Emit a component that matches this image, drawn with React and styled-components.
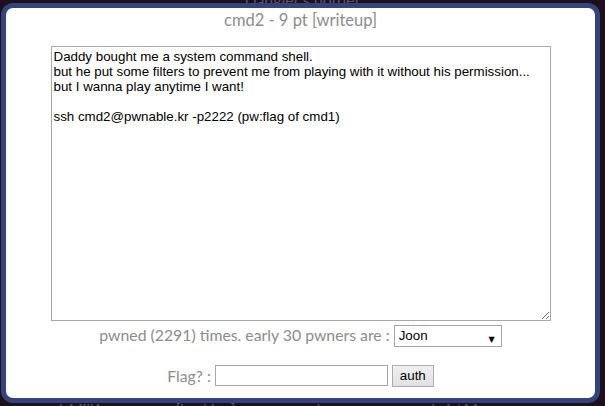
import styled, { createGlobalStyle } from "styled-components"

const GlobalStyle = createGlobalStyle`
  html, body {
    margin: 0;
    padding: 0;
    background: #1d0f1c;
    overflow: hidden;
  }
`

const Page = styled.div`
  position: relative;
  width: 605px;
  height: 406px;
  overflow: hidden;
  background: #1d0f1c;
  font-family: Lato, "Liberation Sans", sans-serif;
`

const BackTitle = styled.div`
  text-align: center;
  color: #5e5363;
  font-size: 16px;
  line-height: 16px;
  margin-top: -8px;
`

const BackRow = styled.div`
  position: absolute;
  left: 18px;
  top: 400px;
  display: grid;
  grid-template-columns: repeat(4, 125px);
  color: #5e5363;
  font-size: 15px;
  text-align: center;
`

const Modal = styled.div`
  position: absolute;
  left: 1px;
  top: 3px;
  width: 589px;
  height: 390px;
  background: #fff;
  border: 5px solid #33447a;
  border-radius: 12px;
  display: flex;
  flex-direction: column;
  align-items: center;
`

const Title = styled.div`
  margin-top: 1px;
  color: #8c8c8c;
  font-size: 16.5px;
  line-height: 22px;
`

const Desc = styled.textarea`
  margin-top: 15px;
  width: 500px;
  height: 275px;
  box-sizing: border-box;
  border: 1px solid #a9a9a9;
  padding: 2px;
  font-family: "Liberation Sans", Arial, sans-serif;
  font-size: 13.33px;
  line-height: 15px;
  color: #000;
  resize: both;
  outline: none;
`

const Row = styled.div`
  display: flex;
  align-items: center;
  margin-top: ${(p) => p.$top}px;
  color: #8c8c8c;
  font-size: 15.8px;
  line-height: 20px;
`

const Label = styled.span`
  margin-right: 4px;
`

const SelectWrap = styled.span`
  position: relative;
  display: inline-block;
`

const Select = styled.select`
  appearance: none;
  width: 108px;
  height: 22px;
  box-sizing: border-box;
  border: 1px solid #a6a6a6;
  background: #fff;
  padding: 0 4px;
  font-family: "Liberation Sans", Arial, sans-serif;
  font-size: 13.33px;
  color: #000;
  outline: none;
`

const Arrow = styled.span`
  position: absolute;
  right: 7px;
  top: 6px;
  font-size: 8px;
  color: #000;
  pointer-events: none;
  font-family: "DejaVu Sans", sans-serif;
`

const FlagInput = styled.input`
  width: 173px;
  height: 21px;
  box-sizing: border-box;
  border: 1px solid #a6a6a6;
  padding: 1px 2px;
  margin: 0;
  font-family: "Liberation Sans", Arial, sans-serif;
  font-size: 13.33px;
  outline: none;
`

const AuthButton = styled.button`
  margin-left: 4px;
  height: 22px;
  box-sizing: border-box;
  padding: 0 7px;
  border: 1px solid #adadad;
  background: linear-gradient(#f0f0f0, #e1e1e1);
  font-family: "Liberation Sans", Arial, sans-serif;
  font-size: 13.33px;
  color: #000;
`

const text = `Daddy bought me a system command shell.
but he put some filters to prevent me from playing with it without his permission...
but I wanna play anytime I want!

ssh cmd2@pwnable.kr -p2222 (pw:flag of cmd1)`

export default function App() {
  return (
    <Page>
      <GlobalStyle />
      <BackTitle>Dangler's border</BackTitle>
      <BackRow>
        <span>IsMill1</span>
        <span>[hacking]</span>
        <span>dmnn</span>
        <span>kaist11</span>
      </BackRow>
      <Modal>
        <Title>cmd2 - 9 pt [writeup]</Title>
        <Desc defaultValue={text} />
        <Row $top={3}>
          <Label>pwned (2291) times. early 30 pwners are :</Label>
          <SelectWrap>
            <Select defaultValue="Joon">
              <option>Joon</option>
            </Select>
            <Arrow>▼</Arrow>
          </SelectWrap>
        </Row>
        <Row $top={18}>
          <Label>Flag? :</Label>
          <FlagInput />
          <AuthButton>auth</AuthButton>
        </Row>
      </Modal>
    </Page>
  )
}
